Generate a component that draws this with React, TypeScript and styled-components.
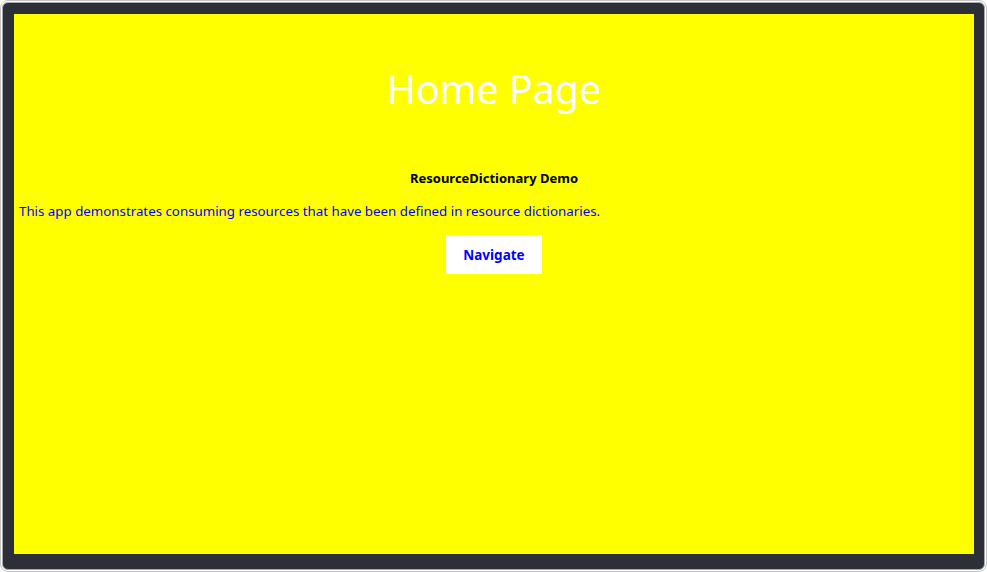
import React from 'react';
import styled, { createGlobalStyle } from 'styled-components';

const GlobalStyle = createGlobalStyle`
  html, body {
    margin: 0;
    padding: 0;
    background: #ffffff;
  }
  * {
    box-sizing: border-box;
  }
`;

const Device = styled.div`
  width: 987px;
  height: 572px;
  border: 1px solid #c4c4c4;
  border-radius: 8px;
  padding: 1px;
  background: #ffffff;
`;

const Bezel = styled.div`
  height: 100%;
  border: 1px solid #a8a8ac;
  border-radius: 6px;
  background: #2d2f38;
  padding: 11px 10px 15px 11px;
`;

const Page = styled.div`
  width: 960px;
  height: 540px;
  background: #ffff00;
  display: flex;
  flex-direction: column;
  padding: 5px;
  font-family: "Noto Sans", "Open Sans", sans-serif;
`;

const Title = styled.h1`
  margin: 43px 0 0;
  text-align: center;
  color: #ffffff;
  font-size: 39.3px;
  font-weight: 400;
  line-height: 54px;
`;

const Heading = styled.div`
  margin-top: 52px;
  text-align: center;
  color: #000000;
  font-size: 13px;
  font-weight: 700;
  line-height: 20px;
`;

const Body = styled.p`
  margin: 13px 0 0;
  color: #0000ff;
  font-size: 13.3px;
  line-height: 20px;
`;

const NavButton = styled.button`
  align-self: center;
  margin-top: 14px;
  width: 96px;
  height: 39px;
  border: none;
  background: #ffffff;
  color: #0000ff;
  font-family: inherit;
  font-size: 13.5px;
  font-weight: 700;
  cursor: pointer;
`;

export default function App() {
  return (
    <>
      <GlobalStyle />
      <Device>
        <Bezel>
          <Page>
            <Title>Home Page</Title>
            <Heading>ResourceDictionary Demo</Heading>
            <Body>This app demonstrates consuming resources that have been defined in resource dictionaries.</Body>
            <NavButton>Navigate</NavButton>
          </Page>
        </Bezel>
      </Device>
    </>
  );
}
